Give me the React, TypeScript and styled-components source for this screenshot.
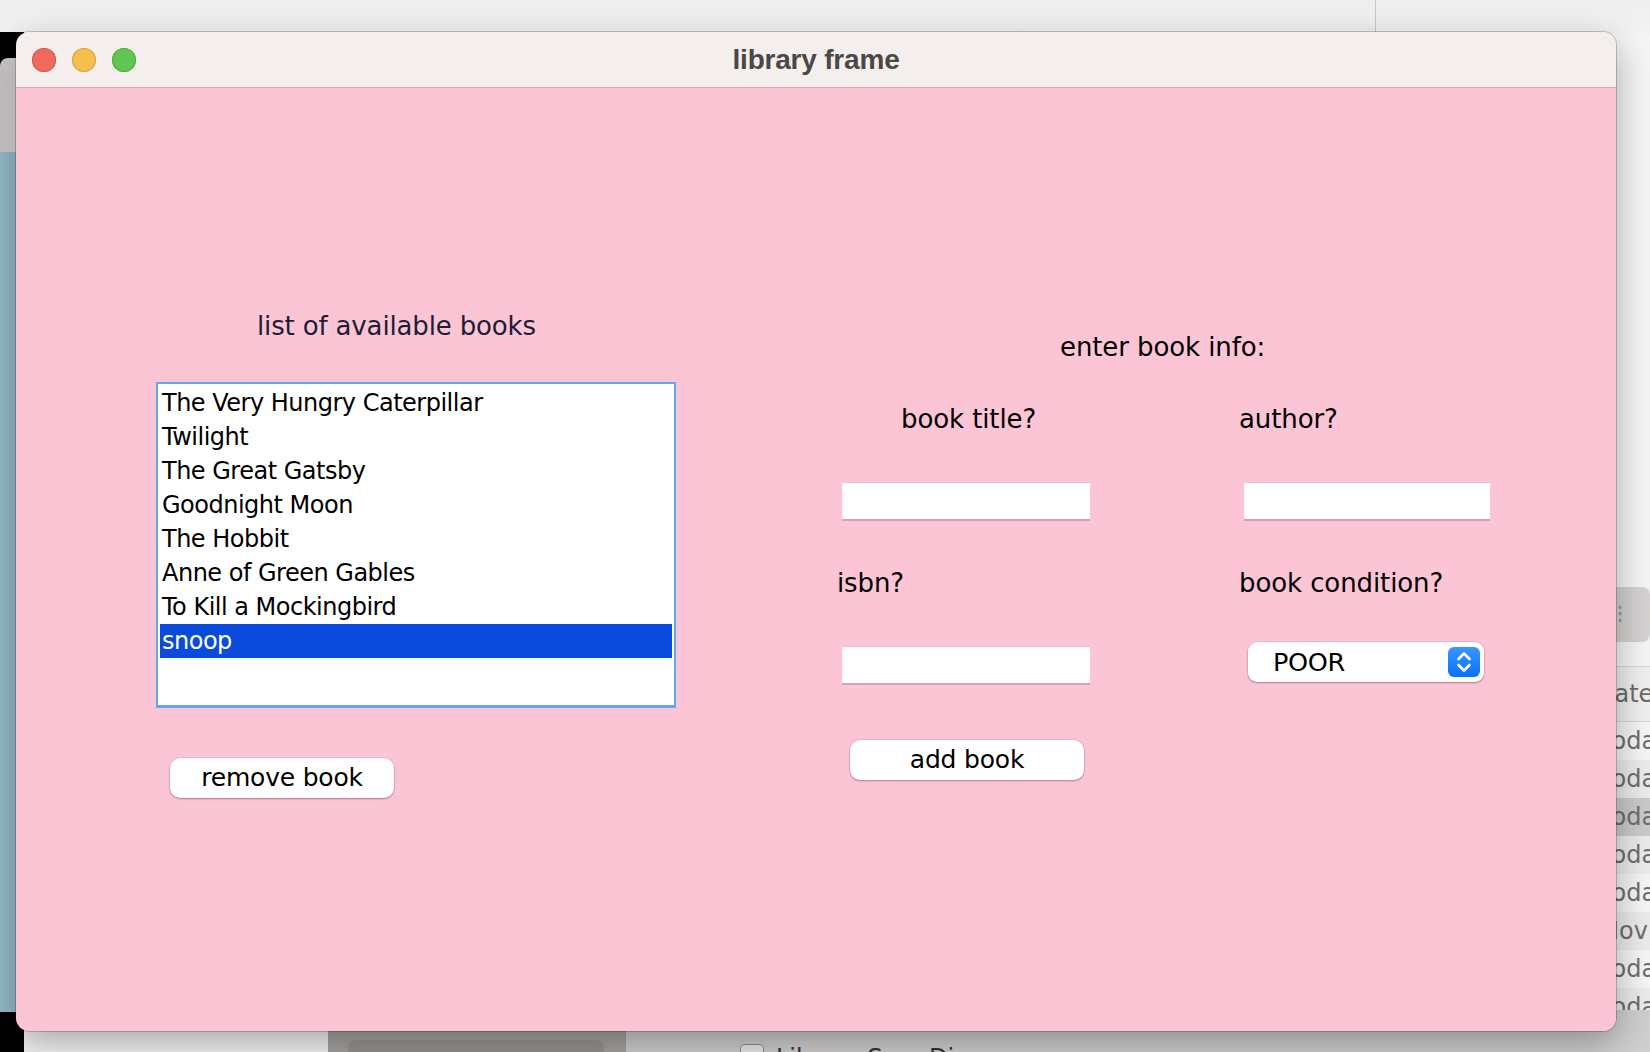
import styled, { createGlobalStyle } from "styled-components";

const GlobalStyle = createGlobalStyle`
  html, body {
    margin: 0;
    padding: 0;
  }
  body {
    width: 1650px;
    height: 1052px;
    overflow: hidden;
    background: #f3f3f3;
    font-family: "DejaVu Sans", "Liberation Sans", sans-serif;
  }
  * {
    box-sizing: border-box;
  }
`;

const Desktop = styled.div`
  position: relative;
  width: 1650px;
  height: 1052px;
  overflow: hidden;
  background: linear-gradient(#eeeeee, #f6f6f6 60px, #f5f5f5);
`;

/* ---- stuff behind the window ---- */

const DividerLine = styled.div`
  position: absolute;
  left: 1375px;
  top: 0;
  width: 1px;
  height: 34px;
  background: #c4c8cc;
`;

const LeftBack = styled.div`
  position: absolute;
  left: 0;
  top: 32px;
  width: 24px;
  bottom: 0;
  background: #000;
  display: flex;
  flex-direction: column;
  padding-top: 26px;
`;

const LeftWindowEdge = styled.div`
  height: 94px;
  background: linear-gradient(90deg, #c9c7c6, #e0dedd);
  border-top-left-radius: 8px;
`;

const LeftWater = styled.div`
  height: 860px;
  background: #94bdca;
`;

const BottomBlock = styled.div`
  position: absolute;
  left: 328px;
  top: 1010px;
  width: 298px;
  bottom: 0;
  background: #a6a3a1;
  padding: 30px 22px 0 20px;
`;

const BottomSlot = styled.div`
  height: 30px;
  border-radius: 8px;
  background: #979492;
`;

const FinderPane = styled.div`
  position: absolute;
  left: 1560px;
  top: 34px;
  right: 0;
  bottom: 0;
  background: #f5f5f5;
  display: flex;
  flex-direction: column;
  padding-top: 553px;
`;

const FinderButton = styled.div`
  margin-left: 40px;
  height: 55px;
  border-radius: 8px;
  background: #d4d2d1;
  color: #9a9a9a;
  font-size: 26px;
  line-height: 55px;
  padding-left: 16px;
`;

const FinderHeader = styled.div`
  margin-top: 24px;
  height: 56px;
  border-top: 1px solid #d6d6d6;
  border-bottom: 1px solid #d6d6d6;
  background: #efefef;
  padding-left: 36px;
  font-size: 24px;
  line-height: 54px;
  color: #6a6a6a;
  white-space: nowrap;
`;

const FinderRow = styled.div<{ $tone: "a" | "b" | "sel" }>`
  height: 38px;
  line-height: 38px;
  padding-left: 41px;
  font-size: 24px;
  color: #6d6d6d;
  white-space: nowrap;
  background: ${(p) =>
    p.$tone === "sel" ? "#cbcaca" : p.$tone === "a" ? "#ebebeb" : "#f5f5f5"};
`;

const FinderBottom = styled.div`
  position: absolute;
  left: 626px;
  top: 1010px;
  right: 0;
  bottom: 0;
  background: #cfcfcf;
  display: flex;
  align-items: flex-start;
  gap: 12px;
  padding: 34px 0 0 114px;
  font-size: 24px;
  color: #333;
`;

const FinderCheck = styled.div`
  width: 24px;
  height: 24px;
  border: 1px solid #8e8e8e;
  border-radius: 4px;
  background: #e8e8e8;
`;

/* ---- the window ---- */

const Window = styled.div`
  position: absolute;
  left: 16px;
  top: 32px;
  width: 1600px;
  height: 999px;
  border-radius: 13px;
  overflow: hidden;
  display: flex;
  flex-direction: column;
  box-shadow: 0 0 0 1px rgba(0, 0, 0, 0.2), 0 12px 36px rgba(0, 0, 0, 0.32);
`;

const TitleBar = styled.div`
  height: 56px;
  flex-shrink: 0;
  display: grid;
  grid-template-columns: 1fr auto 1fr;
  align-items: center;
  background: #f4efed;
  border-bottom: 1px solid #d5a8b3;
`;

const Lights = styled.div`
  display: flex;
  gap: 16px;
  padding-left: 16px;
`;

const Light = styled.div<{ $color: string; $edge: string }>`
  width: 24px;
  height: 24px;
  border-radius: 50%;
  background: ${(p) => p.$color};
  box-shadow: inset 0 0 0 1px ${(p) => p.$edge};
`;

const Title = styled.div`
  font-family: "Liberation Sans", Arial, sans-serif;
  font-weight: 700;
  font-size: 28px;
  color: #4b4747;
  letter-spacing: -0.2px;
`;

const Content = styled.div`
  flex: 1;
  background: #fcc5d5;
  display: flex;
  align-items: flex-start;
  padding-left: 140px;
  color: #000;
`;

const LeftColumn = styled.div`
  width: 520px;
  margin-top: 223px;
  display: flex;
  flex-direction: column;
  align-items: flex-start;
`;

const ListCaption = styled.div`
  margin-left: 101px;
  font-size: 26px;
  line-height: 30px;
  color: #1c1d36;
  letter-spacing: -0.15px;
`;

const BookList = styled.ul`
  margin: 41px 0 0;
  padding: 2px;
  list-style: none;
  width: 520px;
  height: 326px;
  border: 2px solid #62a8ec;
  border-bottom-width: 3px;
  background: #fff;
`;

const BookRow = styled.li<{ $selected?: boolean }>`
  height: 34px;
  line-height: 35px;
  padding-left: 2px;
  font-size: 24px;
  letter-spacing: -0.5px;
  white-space: nowrap;
  color: ${(p) => (p.$selected ? "#fff" : "#000")};
  background: ${(p) => (p.$selected ? "#0a4bdb" : "transparent")};
`;

const PillButton = styled.button<{ $indent: number; $width: number }>`
  all: unset;
  box-sizing: border-box;
  margin-left: ${(p) => p.$indent}px;
  width: ${(p) => p.$width}px;
  height: 40px;
  border-radius: 10px;
  background: #fff;
  box-shadow: 0 1px 2px rgba(120, 50, 70, 0.45), 0 0 0 0.5px rgba(120, 50, 70, 0.2);
  text-align: center;
  font-family: "DejaVu Sans", sans-serif;
  font-size: 25px;
  line-height: 40px;
  letter-spacing: -0.2px;
  color: #000;
`;

const RemoveWrap = styled.div`
  margin-top: 50px;
`;

const FormPanel = styled.div`
  margin-left: 161px;
  margin-top: 244px;
  display: flex;
  flex-direction: column;
`;

const FormHeading = styled.div`
  margin-left: 223px;
  font-size: 26px;
  line-height: 30px;
  letter-spacing: -0.1px;
`;

const FormRow = styled.div<{ $gap: number }>`
  margin-top: ${(p) => p.$gap}px;
  display: grid;
  grid-template-columns: 260px 260px;
  column-gap: 142px;
  align-items: start;
`;

const FieldLabel = styled.div<{ $indent?: number }>`
  margin-left: ${(p) => p.$indent ?? 0}px;
  font-size: 26px;
  line-height: 30px;
  letter-spacing: -0.1px;
  white-space: nowrap;
`;

const TextField = styled.div<{ $drop?: number; $width?: number }>`
  margin-left: 5px;
  margin-top: ${(p) => p.$drop ?? 0}px;
  width: ${(p) => p.$width ?? 248}px;
  height: 37px;
  background: #fff;
  border-top: 1px solid #ecc3cd;
  border-left: 1px solid #fff6f8;
  box-shadow: 0 2px 0 #d5a2af;
`;

const Combo = styled.div`
  margin-left: 9px;
  width: 236px;
  height: 40px;
  border-radius: 9px;
  background: #fff;
  box-shadow: 0 1px 2px rgba(120, 50, 70, 0.45), 0 0 0 0.5px rgba(120, 50, 70, 0.2);
  display: flex;
  align-items: center;
  justify-content: space-between;
  padding: 0 4px 0 25px;
  font-size: 25.5px;
  letter-spacing: -0.3px;
`;

const Stepper = styled.div`
  width: 32px;
  height: 30px;
  border-radius: 6px;
  background: linear-gradient(#3a97ff, #0a6ff7);
  display: flex;
  align-items: center;
  justify-content: center;
`;

const books = [
  "The Very Hungry Caterpillar",
  "Twilight",
  "The Great Gatsby",
  "Goodnight Moon",
  "The Hobbit",
  "Anne of Green Gables",
  "To Kill a Mockingbird",
  "snoop",
];

const finderRows: { text: string; tone: "a" | "b" | "sel" }[] = [
  { text: "Today at 10:42 AM", tone: "b" },
  { text: "Today at 10:40 AM", tone: "a" },
  { text: "Today at 10:31 AM", tone: "sel" },
  { text: "Today at 10:12 AM", tone: "a" },
  { text: "Today at 9:58 AM", tone: "b" },
  { text: "Nov 3, 2023", tone: "a" },
  { text: "Today at 9:40 AM", tone: "b" },
  { text: "Today at 9:21 AM", tone: "a" },
];

const App = () => {
  return (
    <Desktop>
      <GlobalStyle />
      <DividerLine />
      <LeftBack>
        <LeftWindowEdge />
        <LeftWater />
      </LeftBack>
      <BottomBlock>
        <BottomSlot />
      </BottomBlock>
      <FinderPane>
        <FinderButton>⁝</FinderButton>
        <FinderHeader>Date Modified</FinderHeader>
        {finderRows.map((r, i) => (
          <FinderRow key={i} $tone={r.tone}>
            {r.text}
          </FinderRow>
        ))}
      </FinderPane>
      <FinderBottom>
        <FinderCheck />
        <span>Library Sum Di</span>
      </FinderBottom>

      <Window>
        <TitleBar>
          <Lights>
            <Light $color="#ee6a5e" $edge="#d8574c" />
            <Light $color="#f5bf4f" $edge="#dba43c" />
            <Light $color="#61c554" $edge="#4fae43" />
          </Lights>
          <Title>library frame</Title>
          <div />
        </TitleBar>

        <Content>
          <LeftColumn>
            <ListCaption>list of available books</ListCaption>
            <BookList>
              {books.map((b) => (
                <BookRow key={b} $selected={b === "snoop"}>
                  {b}
                </BookRow>
              ))}
            </BookList>
            <RemoveWrap>
              <PillButton $indent={14} $width={224}>
                remove book
              </PillButton>
            </RemoveWrap>
          </LeftColumn>

          <FormPanel>
            <FormHeading>enter book info:</FormHeading>
            <FormRow $gap={42}>
              <FieldLabel $indent={64}>book title?</FieldLabel>
              <FieldLabel>author?</FieldLabel>
            </FormRow>
            <FormRow $gap={48}>
              <TextField />
              <TextField $width={246} />
            </FormRow>
            <FormRow $gap={49}>
              <FieldLabel>isbn?</FieldLabel>
              <FieldLabel>book condition?</FieldLabel>
            </FormRow>
            <FormRow $gap={44}>
              <TextField $drop={4} />
              <Combo>
                <span>POOR</span>
                <Stepper>
                  <svg width="32" height="30" viewBox="0 0 32 30">
                    <path
                      d="M10.5 12 L16 6.5 L21.5 12 M10.5 18 L16 23.5 L21.5 18"
                      fill="none"
                      stroke="#fff"
                      strokeWidth="2.6"
                      strokeLinecap="round"
                      strokeLinejoin="round"
                    />
                  </svg>
                </Stepper>
              </Combo>
            </FormRow>
            <FormRow $gap={57}>
              <PillButton $indent={13} $width={234}>
                add book
              </PillButton>
            </FormRow>
          </FormPanel>
        </Content>
      </Window>
    </Desktop>
  );
};

export default App;
